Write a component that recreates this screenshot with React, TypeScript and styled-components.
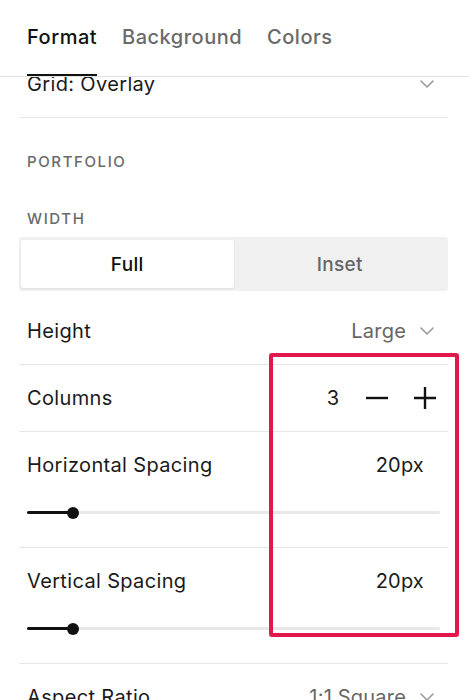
import React, { useLayoutEffect, useRef, useState } from 'react';
import styled, { createGlobalStyle } from 'styled-components';

const GlobalStyle = createGlobalStyle`
  html, body {
    margin: 0;
    padding: 0;
    background: #fff;
  }
  body {
    font-family: Inter, "Liberation Sans", Arial, sans-serif;
    color: #1a1a1a;
    -webkit-font-smoothing: antialiased;
  }
  * {
    box-sizing: border-box;
  }
`;

const Panel = styled.div`
  position: relative;
  width: 469px;
  height: 700px;
  display: flex;
  flex-direction: column;
  overflow: hidden;
  background: #fff;
`;

const TabBar = styled.div`
  display: flex;
  gap: 25px;
  padding-left: 27px;
  border-bottom: 1px solid #e2e2e2;
  background: #fff;
  position: relative;
  z-index: 1;
`;

const Tab = styled.button<{ $active?: boolean }>`
  height: 76px;
  padding: 0;
  margin: 0;
  border: none;
  border-bottom: 2px solid ${p => (p.$active ? '#111' : 'transparent')};
  background: none;
  font-family: inherit;
  font-size: 20px;
  font-weight: 500;
  letter-spacing: 0.5px;
  color: ${p => (p.$active ? '#111' : '#6a6a6a')};
  cursor: pointer;
`;

const Scroller = styled.div`
  flex: 1;
  overflow-y: auto;
  scrollbar-width: none;
  &::-webkit-scrollbar {
    display: none;
  }
`;

const Body = styled.div`
  padding: 0 21px 40px 19px;
`;

const ListRow = styled.div`
  height: 67px;
  display: flex;
  align-items: center;
  justify-content: space-between;
  padding: 0 8px;
  border-bottom: 1px solid #e6e6e6;
`;

const Label = styled.span`
  font-size: 20px;
  letter-spacing: 0.35px;
  color: #1a1a1a;
`;

const Value = styled.span<{ $muted?: boolean; $gap?: number }>`
  display: flex;
  align-items: center;
  gap: 14px;
  font-size: 20px;
  letter-spacing: 0.2px;
  color: ${p => (p.$muted ? '#666' : '#1a1a1a')};
  margin-right: ${p => p.$gap ?? 0}px;
`;

const SectionLabel = styled.div<{ $top: number }>`
  margin-top: ${p => p.$top}px;
  padding-left: 8px;
  font-size: 15px;
  line-height: 20px;
  font-weight: 500;
  letter-spacing: 1.6px;
  color: #6a6a6a;
`;

const Segmented = styled.div`
  margin-top: 8px;
  height: 54px;
  display: grid;
  grid-template-columns: 1fr 1fr;
  padding: 3px 2px;
  background: #f0f0f0;
  border-radius: 3px;
`;

const Segment = styled.button<{ $active?: boolean }>`
  border: none;
  border-radius: 2px;
  font-family: inherit;
  font-size: 19px;
  font-weight: 500;
  letter-spacing: 0.3px;
  color: ${p => (p.$active ? '#111' : '#666')};
  background: ${p => (p.$active ? '#fff' : 'transparent')};
  box-shadow: ${p => (p.$active ? '0 1px 2px rgba(0,0,0,0.08)' : 'none')};
  cursor: pointer;
`;

const SegmentedSpacer = styled.div`
  height: 7px;
`;

const SliderRow = styled.div`
  height: 116px;
  padding: 0 8px;
  border-bottom: 1px solid #e6e6e6;
`;

const SliderHead = styled.div`
  height: 66px;
  display: flex;
  align-items: center;
  justify-content: space-between;
`;

const Track = styled.div`
  position: relative;
  margin-top: 13px;
  height: 3px;
  background: #e8e8e8;
  border-radius: 2px;
`;

const Fill = styled.div`
  height: 100%;
  background: #111;
  border-radius: 2px;
`;

const Knob = styled.div`
  position: absolute;
  top: 50%;
  width: 12px;
  height: 12px;
  margin: -6px 0 0 -6px;
  border-radius: 50%;
  background: #111;
`;

const Stepper = styled.div`
  display: flex;
  align-items: center;
  margin-right: 4px;
`;

const StepCount = styled.span`
  font-size: 20px;
  color: #1a1a1a;
  margin-right: 27px;
`;

const StepButton = styled.button`
  display: flex;
  padding: 0;
  border: none;
  background: none;
  cursor: pointer;
  & + & {
    margin-left: 26px;
  }
`;

const Highlight = styled.div`
  position: absolute;
  left: 269px;
  top: 353px;
  width: 190px;
  height: 284px;
  border: 4px solid #e2174c;
  border-radius: 3px;
  pointer-events: none;
`;

const Chevron = () => (
  <svg width="14" height="8" viewBox="0 0 14 8" fill="none">
    <path d="M1 1l6 6 6-6" stroke="#9a9a9a" strokeWidth="1.6" strokeLinecap="round" strokeLinejoin="round" />
  </svg>
);

const Minus = () => (
  <svg width="22" height="22" viewBox="0 0 22 22" fill="none">
    <path d="M0 11h22" stroke="#111" strokeWidth="2.4" />
  </svg>
);

const Plus = () => (
  <svg width="22" height="22" viewBox="0 0 22 22" fill="none">
    <path d="M0 11h22M11 0v22" stroke="#111" strokeWidth="2.4" />
  </svg>
);

const SpacingSlider = ({ label, value, max }: { label: string; value: number; max: number }) => (
  <SliderRow>
    <SliderHead>
      <Label>{label}</Label>
      <Value $gap={16}>{value}px</Value>
    </SliderHead>
    <Track>
      <Fill style={{ width: `${(value / max) * 100}%` }} />
      <Knob style={{ left: `${(value / max) * 100}%` }} />
    </Track>
  </SliderRow>
);

const App = () => {
  const scrollRef = useRef<HTMLDivElement>(null);
  const [tab, setTab] = useState('Format');
  const [width, setWidth] = useState<'Full' | 'Inset'>('Full');
  const [columns, setColumns] = useState(3);

  useLayoutEffect(() => {
    if (scrollRef.current) scrollRef.current.scrollTop = 26;
  }, []);

  return (
    <Panel>
      <GlobalStyle />
      <TabBar>
        {['Format', 'Background', 'Colors'].map(t => (
          <Tab key={t} $active={tab === t} onClick={() => setTab(t)}>
            {t}
          </Tab>
        ))}
      </TabBar>

      <Scroller ref={scrollRef}>
        <Body>
          <ListRow>
            <Label>Grid: Overlay</Label>
            <Value $gap={6}>
              <Chevron />
            </Value>
          </ListRow>

          <SectionLabel $top={34}>PORTFOLIO</SectionLabel>
          <SectionLabel $top={37}>WIDTH</SectionLabel>
          <Segmented>
            <Segment $active={width === 'Full'} onClick={() => setWidth('Full')}>Full</Segment>
            <Segment $active={width === 'Inset'} onClick={() => setWidth('Inset')}>Inset</Segment>
          </Segmented>
          <SegmentedSpacer />

          <ListRow>
            <Label>Height</Label>
            <Value $muted $gap={6}>
              Large
              <Chevron />
            </Value>
          </ListRow>

          <ListRow>
            <Label>Columns</Label>
            <Stepper>
              <StepCount>{columns}</StepCount>
              <StepButton onClick={() => setColumns(c => Math.max(1, c - 1))}>
                <Minus />
              </StepButton>
              <StepButton onClick={() => setColumns(c => c + 1)}>
                <Plus />
              </StepButton>
            </Stepper>
          </ListRow>

          <SpacingSlider label="Horizontal Spacing" value={20} max={180} />
          <SpacingSlider label="Vertical Spacing" value={20} max={180} />

          <ListRow>
            <Label>Aspect Ratio</Label>
            <Value $muted $gap={6}>
              1:1 Square
              <Chevron />
            </Value>
          </ListRow>
        </Body>
      </Scroller>

      <Highlight />
    </Panel>
  );
};

export default App;
